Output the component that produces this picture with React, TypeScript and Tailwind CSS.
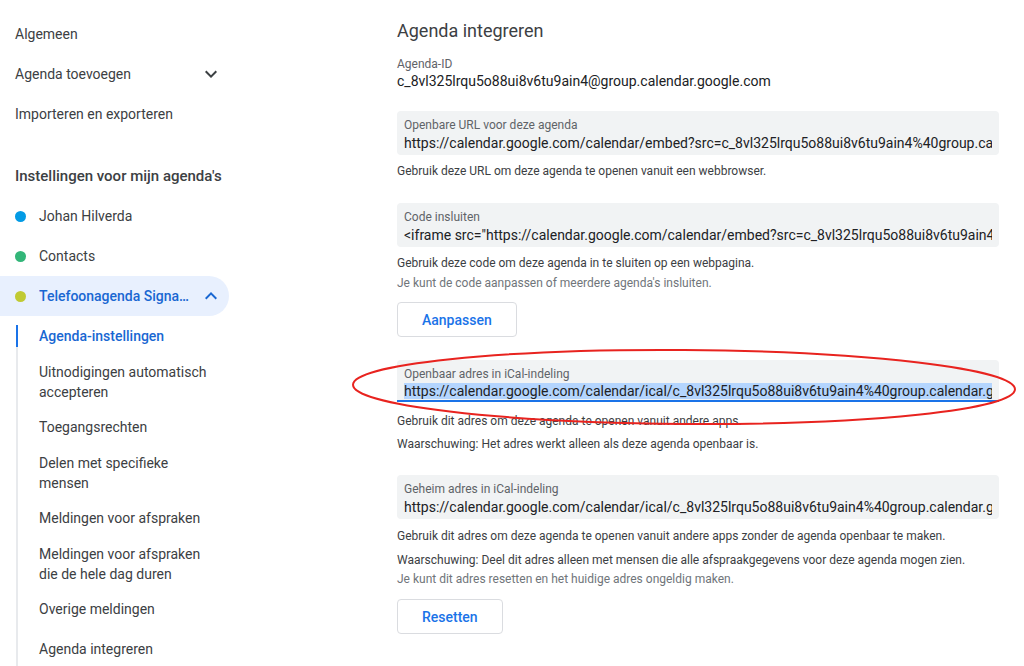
import type { ReactNode } from "react";

const FONT = { fontFamily: "Roboto, 'Noto Sans', Arial, sans-serif" };

function ExpandIcon({ up = false }: { up?: boolean }) {
  return (
    <svg width="24" height="24" viewBox="0 0 24 24" className={up ? "rotate-180" : ""}>
      <path d="M16.59 8.59L12 13.17 7.41 8.59 6 10l6 6 6-6z" fill={up ? "#1967d2" : "#3c4043"} />
    </svg>
  );
}

function TopItem({ label, chevron }: { label: string; chevron?: boolean }) {
  return (
    <div className="flex h-10 items-center pl-[15px] pr-[6px] text-sm text-[#3c4043]">
      <span>{label}</span>
      {chevron && (
        <span className="ml-auto flex">
          <ExpandIcon />
        </span>
      )}
    </div>
  );
}

function CalendarItem({ label, color }: { label: string; color: string }) {
  return (
    <div className="flex h-10 items-center pl-[15px] text-sm text-[#3c4043]">
      <span className={`h-[11px] w-[11px] rounded-full ${color}`} />
      <span className="ml-[13px]">{label}</span>
    </div>
  );
}

function SubItem({ children, double }: { children: ReactNode; double?: boolean }) {
  return (
    <div
      className={`flex items-center pl-[21px] text-sm leading-5 text-[#3c4043] ${
        double ? "h-[51px]" : "h-10"
      }`}
    >
      <span>{children}</span>
    </div>
  );
}

function Field({
  label,
  value,
  selected,
}: {
  label: string;
  value: string;
  selected?: boolean;
}) {
  return (
    <div
      className={`rounded-t-[4px] bg-[#f1f3f4] px-[7px] pt-[6px] ${
        selected ? "border-b-2 border-[#1a73e8]" : "rounded-b-[4px] pb-[2px]"
      }`}
    >
      <div className="text-xs leading-4 text-[#5f6368]">{label}</div>
      <div
        className={`overflow-hidden whitespace-nowrap text-sm text-[#202124] ${
          selected ? "leading-[18px]" : "leading-5"
        }`}
      >
        {selected ? <span className="bg-[#b4d5fe]">{value}</span> : value}
      </div>
    </div>
  );
}

function OutlineButton({ label }: { label: string }) {
  return (
    <button className="h-[35px] rounded-[4px] border border-[#dadce0] bg-white px-6 text-sm font-medium text-[#1a73e8]">
      {label}
    </button>
  );
}

const ID = "c_8vl325lrqu5o88ui8v6tu9ain4";

export default function App() {
  return (
    <div style={FONT} className="relative flex h-[666px] w-[1024px] overflow-hidden bg-white">
      <aside className="w-[229px] shrink-0 pt-[14px]">
        <TopItem label="Algemeen" />
        <TopItem label="Agenda toevoegen" chevron />
        <TopItem label="Importeren en exporteren" />

        <div className="mt-[23px] flex h-[39px] items-center pl-[15px] text-[15px] font-medium text-[#3c4043]">
          Instellingen voor mijn agenda's
        </div>

        <CalendarItem label="Johan Hilverda" color="bg-[#039be5]" />
        <CalendarItem label="Contacts" color="bg-[#33b679]" />
        <div className="flex h-10 items-center rounded-r-full bg-[#e8f0fe] pl-[15px] pr-[6px] text-sm font-medium text-[#1967d2]">
          <span className="h-[11px] w-[11px] shrink-0 rounded-full bg-[#c0ca33]" />
          <span className="ml-[13px] w-[154px] truncate">Telefoonagenda Signaalbedrijf</span>
          <span className="ml-auto flex">
            <ExpandIcon up />
          </span>
        </div>

        <div className="ml-4 mt-[9px] border-l-2 border-[#e8eaed]">
          <div className="-ml-[2px] mb-[9px] h-[22px] border-l-2 border-[#1a73e8] pl-[21px] pt-[1px] text-sm font-medium leading-5 text-[#1967d2]">
            Agenda-instellingen
          </div>
          <SubItem double>
            Uitnodigingen automatisch
            <br />
            accepteren
          </SubItem>
          <SubItem>Toegangsrechten</SubItem>
          <SubItem double>
            Delen met specifieke
            <br />
            mensen
          </SubItem>
          <SubItem>Meldingen voor afspraken</SubItem>
          <SubItem double>
            Meldingen voor afspraken
            <br />
            die de hele dag duren
          </SubItem>
          <SubItem>Overige meldingen</SubItem>
          <SubItem>Agenda integreren</SubItem>
        </div>
      </aside>

      <main className="ml-[168px] w-[602px] pt-[17px]">
        <h2 className="text-lg leading-7 text-[#3c4043]">Agenda integreren</h2>

        <div className="mt-[11px] text-xs leading-4 text-[#5f6368]">Agenda-ID</div>
        <div className="text-sm leading-[18px] text-[#202124]">{ID}@group.calendar.google.com</div>

        <div className="mt-[21px]">
          <Field
            label="Openbare URL voor deze agenda"
            value={`https://calendar.google.com/calendar/embed?src=${ID}%40group.calendar.google.com&ctz=Europe%2FAmsterdam`}
          />
        </div>
        <p className="mt-2 text-xs leading-4 text-[#3c4043]">
          Gebruik deze URL om deze agenda te openen vanuit een webbrowser.
        </p>

        <div className="mt-6">
          <Field
            label="Code insluiten"
            value={`<iframe src="https://calendar.google.com/calendar/embed?src=${ID}%40group.calendar.google.com" style="border: 0" width="800" height="600"></iframe>`}
          />
        </div>
        <p className="mt-[8px] text-xs leading-4 text-[#3c4043]">
          Gebruik deze code om deze agenda in te sluiten op een webpagina.
        </p>
        <p className="mt-1 text-xs leading-4 text-[#70757a]">
          Je kunt de code aanpassen of meerdere agenda's insluiten.
        </p>
        <div className="mt-[11px]">
          <OutlineButton label="Aanpassen" />
        </div>

        <div className="mt-[23px]">
          <Field
            label="Openbaar adres in iCal-indeling"
            value={`https://calendar.google.com/calendar/ical/${ID}%40group.calendar.google.com/public/basic.ics`}
            selected
          />
        </div>
        <p className="mt-[11px] text-xs leading-4 text-[#3c4043]">
          Gebruik dit adres om deze agenda te openen vanuit andere apps.
        </p>
        <p className="mt-[7px] text-xs leading-4 text-[#3c4043]">
          Waarschuwing: Het adres werkt alleen als deze agenda openbaar is.
        </p>

        <div className="mt-[23px]">
          <Field
            label="Geheim adres in iCal-indeling"
            value={`https://calendar.google.com/calendar/ical/${ID}%40group.calendar.google.com/private-0a1b2c3d4e5f/basic.ics`}
          />
        </div>
        <p className="mt-[9px] text-xs leading-4 text-[#3c4043]">
          Gebruik dit adres om deze agenda te openen vanuit andere apps zonder de agenda openbaar te maken.
        </p>
        <p className="mt-2 text-xs leading-4 text-[#3c4043]">
          Waarschuwing: Deel dit adres alleen met mensen die alle afspraakgegevens voor deze agenda mogen zien.
        </p>
        <p className="mt-[3px] text-xs leading-4 text-[#70757a]">
          Je kunt dit adres resetten en het huidige adres ongeldig maken.
        </p>
        <div className="mt-[12px]">
          <OutlineButton label="Resetten" />
        </div>
      </main>

      <svg
        className="pointer-events-none absolute left-0 top-0"
        width="1024"
        height="666"
        viewBox="0 0 1024 666"
      >
        <ellipse
          cx="684"
          cy="387"
          rx="331"
          ry="37"
          fill="none"
          stroke="#e8231f"
          strokeWidth="2"
          transform="rotate(0.4 684 387)"
        />
      </svg>
    </div>
  );
}
